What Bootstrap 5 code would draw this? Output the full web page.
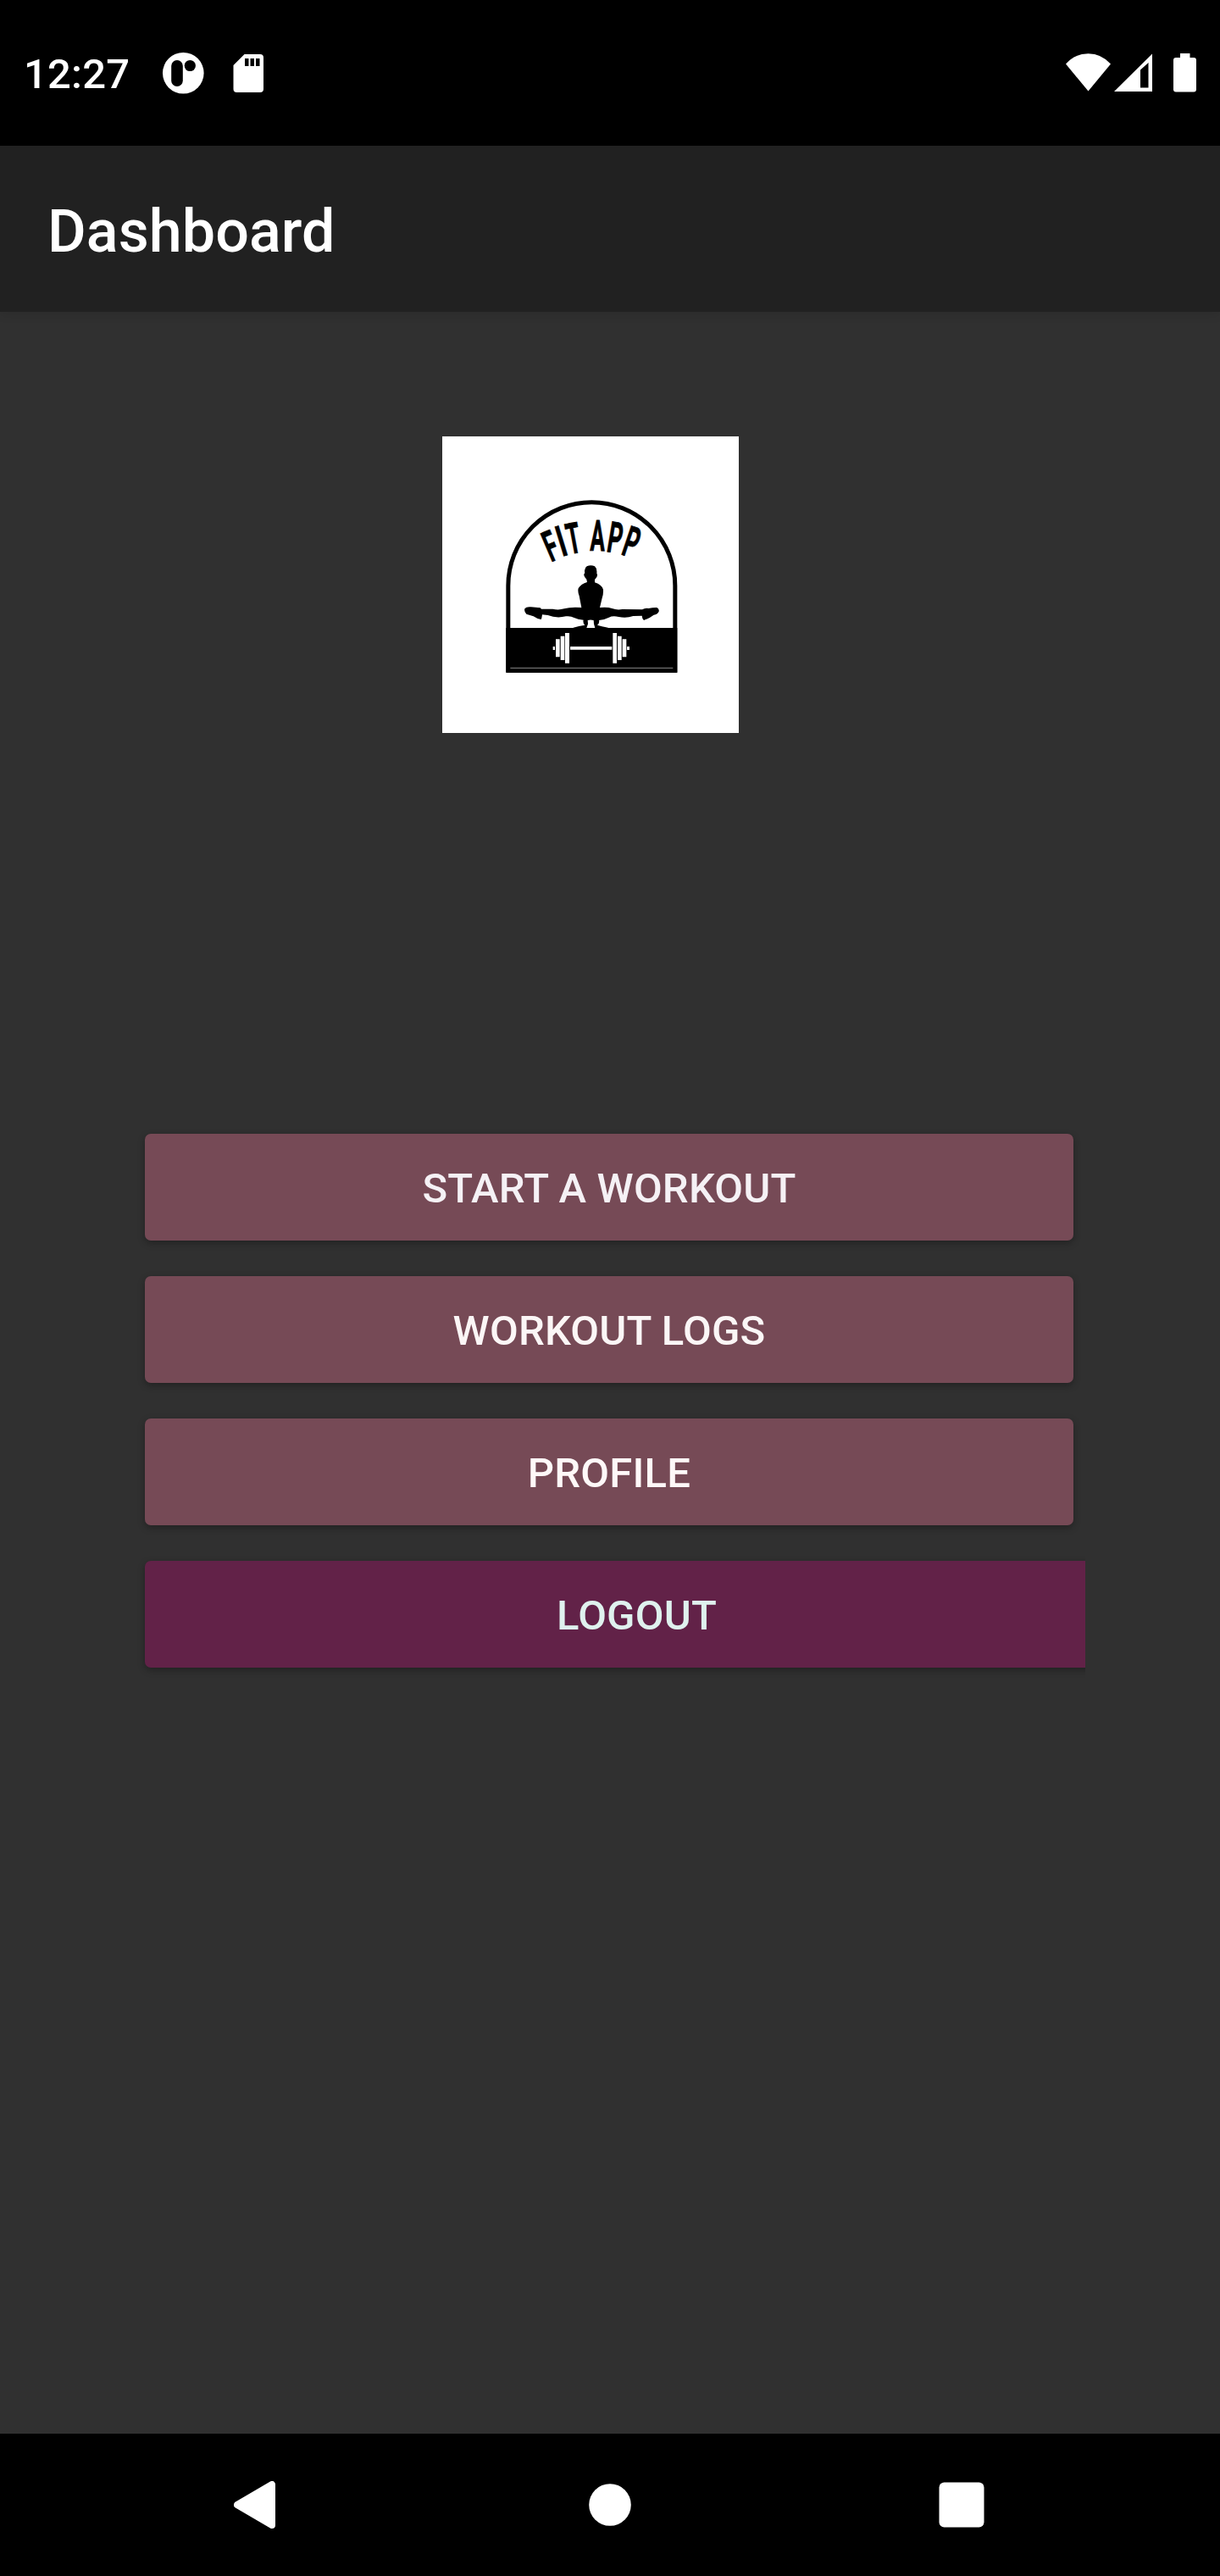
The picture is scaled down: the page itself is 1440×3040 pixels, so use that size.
<!DOCTYPE html>
<html lang="en">
<head>
<meta charset="utf-8">
<meta name="viewport" content="width=device-width, initial-scale=1">
<title>Dashboard</title>
<link href="https://cdn.jsdelivr.net/npm/bootstrap@5.3.0/dist/css/bootstrap.min.css" rel="stylesheet">
<style>
  body { background: #303030; font-family: Roboto, "Liberation Sans", sans-serif; font-weight: 500; }
  .screen { width: 1440px; height: 3040px; overflow: hidden; }
  .status-bar { height: 172px; background: #000; padding: 0 28px 0 28px; color: #fff; }
  .clock { font-size: 49px; line-height: 58px; width: 164px; padding-top: 4px; letter-spacing: .2px; }
  .icon-debug { margin-right: 34px; }
  .icon-signal { margin: 0 25px 0 4px; }
  .app-bar { height: 196px; background: #212121; padding: 6px 56px 0; box-shadow: 0 2px 12px rgba(0,0,0,.12); z-index: 1; }
  .app-title { font-size: 70px; line-height: 84px; color: #fff; font-weight: 500; letter-spacing: .1px; }
  .app-main { padding: 147px 159px 0 171px; }
  .logo { width: 350px; height: 350px; margin-left: 351px; margin-bottom: 473px; }
  .menu { gap: 42px; }
  .btn-action { --bs-btn-padding-y: 0; --bs-btn-border-width: 0; --bs-btn-font-size: 49px; --bs-btn-font-weight: 500; --bs-btn-border-radius: 7px;
    --bs-btn-bg: #764a56; --bs-btn-hover-bg: #805260; --bs-btn-active-bg: #6b424e;
    height: 126px; width: 1096px; padding-top: 4px; line-height: 60px; letter-spacing: .2px; box-shadow: 0 3px 9px rgba(0,0,0,.3); }
  .btn-start { --bs-btn-color: #f5f1f5; --bs-btn-hover-color: #f5f1f5; }
  .btn-logs { --bs-btn-color: #fbf6f6; --bs-btn-hover-color: #fbf6f6; }
  .btn-profile { --bs-btn-color: #fef8f8; --bs-btn-hover-color: #fef8f8; }
  .btn-logout { --bs-btn-color: #dff1ee; --bs-btn-hover-color: #dff1ee; --bs-btn-bg: #622248; --bs-btn-hover-bg: #6e2a52; width: 1161px; }
  .edge-clip { width: 1110px; clip-path: inset(-20px 0 -20px -20px); }
  .nav-keys { height: 168px; background: #000; padding-left: 276px; }
  .key-home { margin-left: 370px; }
  .key-recent { margin-left: 363px; }
</style>
<script src="https://cdn.jsdelivr.net/npm/bootstrap@5.3.0/dist/js/bootstrap.bundle.min.js"></script>
</head>
<body>
<div class="screen d-flex flex-column">
  <div class="status-bar d-flex align-items-center flex-shrink-0">
    <div class="clock flex-shrink-0">12:27</div>
    <svg class="icon-debug" width="49" height="50" viewBox="0 0 49 50">
      <circle cx="24.3" cy="25.3" r="24.3" fill="#fff"/>
      <rect x="10.2" y="10" width="13.6" height="31" rx="6.8"/>
      <circle cx="32.3" cy="16.5" r="6.6"/>
    </svg>
    <svg width="36" height="50" viewBox="0 0 36 50">
      <path fill="#fff" d="M13.5 3H32q4 0 4 4v37q0 4-4 4H4.500q-4 0-4-4V16z"/>
      <path d="M14 8h4.500v9H14zM20.500 8H25v9h-4.500zM27 8h4.500v9H27z"/>
    </svg>
    <svg class="ms-auto" width="53" height="50" viewBox="0 0 53 50">
      <path fill="#fff" d="M0 14.500Q11 2.200 26.500 2.200T53 14.500L26.500 46.500z"/>
    </svg>
    <svg class="icon-signal" width="45" height="50" viewBox="0 0 45 50">
      <path fill="#fff" fill-rule="evenodd" d="M0 47 45 2.500V47zM31 21.500V42.500h9.500V13z"/>
    </svg>
    <svg width="27" height="50" viewBox="0 0 27 50">
      <path fill="#fff" d="M8 2h11.500v5H24q3 0 3 3v34.500q0 3-3 3H3q-3 0-3-3V10q0-3 3-3h5z"/>
    </svg>
  </div>

  <header class="app-bar d-flex align-items-center flex-shrink-0 position-relative">
    <h1 class="app-title m-0">Dashboard</h1>
  </header>

  <main class="app-main flex-grow-1 d-flex flex-column">
    <svg class="logo flex-shrink-0" viewBox="36 45 1050 1050" role="img" aria-label="Fit App">
      <rect x="36" y="45" width="1050" height="1050" fill="#fff"/>
      <path d="M269.500 873.500V573.500a295.500 295.500 0 0 1 591 0V873.500z" fill="none" stroke="#000" stroke-width="15"/>
      <rect x="262" y="723" width="606" height="158"/>
      <path d="M277 865H853" stroke="#888" stroke-width="3"/>
      <g font-family="Roboto, 'Liberation Sans', sans-serif" font-weight="700" font-size="152" stroke="#000" stroke-width="2.500">
        <text transform="translate(432 486) rotate(-23) scale(.52 1)" x="-23">F</text>
        <text transform="translate(473 467) rotate(-17) scale(.62 1)" text-anchor="middle">I</text>
        <text transform="translate(510 458) rotate(-10.500) scale(.52 1)" text-anchor="middle">T</text>
        <text transform="translate(585 450) rotate(1.500) scale(.51 1)" text-anchor="middle">A</text>
        <text transform="translate(627 454) rotate(9.500) scale(.52 1)" x="-23">P</text>
        <text transform="translate(677 466) rotate(18.500) scale(.52 1)" x="-23">P</text>
      </g>
      <path d="M548 505Q562 498 576 505Q585 513 583 530Q587 534 583 543Q579 549 576 552V562Q601 570 606 587Q607 604 602 617L594 651Q621 648 637 654Q655 661 674 657L744 658Q754 652 766 654Q785 650 796 651Q805 656 803 665Q798 675 785 677Q771 688 750 696Q744 692 743 680L712 681Q687 690 661 684Q640 679 626 686Q613 693 591 696Q594 705 585 713Q599 717 623 722V726H500V722Q520 716 541 713Q533 705 536 695Q516 694 503 687Q491 680 474 682Q440 690 410 678L390 676Q389 687 386 693Q373 692 359 682L334 674Q325 666 328 655Q334 647 350 649L383 652L387 656L427 656Q448 661 468 655Q490 648 529 651L521 610Q515 595 518 583Q528 567 549 561L547 551Q540 545 538 537Q537 531 541 529Q537 512 548 505Z"/>
      <path fill="#fff" d="M551 696Q561 693 572 696L573 709L577 723H547L552 709Z"/>
      <path fill="#fff" d="M428 789h7v12h-7zM438 763h14v63h-14zM455 752h14v85h-14zM471 741h15v107h-15zM489 789h148v11H489zM640 741h14v107h-14zM657 752h14v85h-14zM674 763h14v63h-14zM690 789h9v12h-9z"/>
    </svg>
    <div class="menu d-flex flex-column">
      <button type="button" class="btn btn-action btn-start">START A WORKOUT</button>
      <button type="button" class="btn btn-action btn-logs">WORKOUT LOGS</button>
      <button type="button" class="btn btn-action btn-profile">PROFILE</button>
      <div class="edge-clip d-flex"><button type="button" class="btn btn-action btn-logout flex-shrink-0">LOGOUT</button></div>
    </div>
  </main>

  <nav class="nav-keys d-flex align-items-center flex-shrink-0" aria-label="System navigation">
    <svg width="49" height="56" viewBox="0 0 49 56"><path fill="#fff" stroke="#fff" stroke-width="8" stroke-linejoin="round" d="M4 28 45 4V52z"/></svg>
    <svg class="key-home" width="50" height="50" viewBox="0 0 50 50"><circle cx="25" cy="25" r="24.800" fill="#fff"/></svg>
    <svg class="key-recent" width="54" height="54" viewBox="0 0 54 54"><rect x=".5" y=".5" width="53" height="53" rx="6" fill="#fff"/></svg>
  </nav>
</div>
</body>
</html>
